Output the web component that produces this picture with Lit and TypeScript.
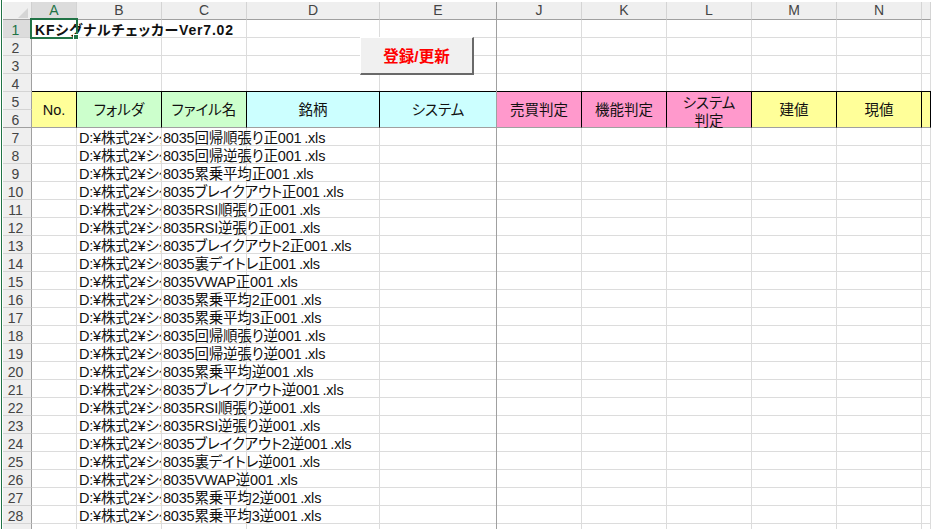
import { LitElement, css, html } from 'lit';
import { customElement } from 'lit/decorators.js';

const COLUMNS = ['A', 'B', 'C', 'D', 'E', 'J', 'K', 'L', 'M', 'N', ''];
const ROW_COUNT = 29;

const HEADERS = [
  { label: 'No.', tone: 'yellow' },
  { label: 'フォルダ', tone: 'green' },
  { label: 'ファイル名', tone: 'green' },
  { label: '銘柄', tone: 'cyan' },
  { label: 'システム', tone: 'cyan' },
  { label: '売買判定', tone: 'pink' },
  { label: '機能判定', tone: 'pink' },
  { label: 'システム<br>判定', tone: 'pink tall' },
  { label: '建値', tone: 'yellow' },
  { label: '現値', tone: 'yellow' },
  { label: '', tone: 'yellow' },
];

const NAMES = ['回帰順張り', '回帰逆張り', '累乗平均', 'ブレイクアウト', 'RSI順張り', 'RSI逆張り', 'ブレイクアウト2', '裏デイトレ', 'VWAP', '累乗平均2', '累乗平均3'];
const FILES = [...NAMES.map((n) => `8035${n}正001 .xls`), ...NAMES.map((n) => `8035${n}逆001 .xls`)];

@customElement('app-root')
export class AppRoot extends LitElement {
  static styles = css`
    :host {
      display: block;
      position: relative;
      width: 931px;
      height: 529px;
      overflow: hidden;
      background: #fff;
      font-family: 'Liberation Sans', 'Noto Sans CJK JP', sans-serif;
      font-feature-settings: 'palt';
      font-size: 14.5px;
      color: #111;
    }

    .edge {
      position: absolute;
      left: 1px;
      top: 0;
      bottom: 0;
      width: 1px;
      background: #217346;
      z-index: 5;
    }

    .sheet {
      display: grid;
      grid-template-columns: 32px 45px 85px 85px 133px 117px 85px 85px 85px 85px 85px 9px;
      grid-template-rows: 2px 18px repeat(29, 18px);
    }

    .top {
      grid-column: 1 / -1;
    }

    .corner {
      background: #efefef;
      border-bottom: 1px solid #a0a0a0;
      border-right: 1px solid #d0d0d0;
      box-sizing: border-box;
      position: relative;
      margin-left: 3px;
    }

    .corner::after {
      content: '';
      position: absolute;
      right: 3px;
      bottom: 1px;
      border-left: 10px solid transparent;
      border-bottom: 10px solid #d5d5d5;
    }

    .col {
      background: #efefef;
      border-bottom: 1px solid #a0a0a0;
      border-right: 1px solid #d4d4d4;
      box-sizing: border-box;
      color: #444;
      font-size: 14px;
      line-height: 17px;
      text-align: center;
    }

    .col.active {
      background: #dcdcdc;
      color: #217346;
      border-bottom-color: #217346;
    }

    .row {
      background: #efefef;
      border-bottom: 1px solid #d4d4d4;
      border-right: 1px solid #a0a0a0;
      box-sizing: border-box;
      color: #444;
      font-size: 14px;
      line-height: 18px;
      padding-top: 1px;
      text-align: center;
      margin-left: 3px;
      padding-right: 3px;
    }

    .row.active {
      background: #dcdcdc;
      color: #217346;
    }

    .row.split {
      border-bottom-color: #a0a0a0;
    }

    .cell {
      border-bottom: 1px solid #dcdcdc;
      border-right: 1px solid #dcdcdc;
      box-sizing: border-box;
      line-height: 18px;
      padding-top: 1px;
      white-space: nowrap;
      overflow: hidden;
      padding-left: 2px;
      letter-spacing: -0.2px;
      word-spacing: -1px;
    }

    .cell.file {
      overflow: visible;
      padding-left: 1px;
    }

    .cell.freeze {
      border-right-color: #a0a0a0;
    }

    .title {
      overflow: visible;
      font-weight: 700;
      font-size: 14px;
      letter-spacing: 0.8px;
      padding-left: 3px;
      position: relative;
      z-index: 1;
    }

    .head {
      grid-row: span 2;
      display: flex;
      align-items: center;
      justify-content: center;
      text-align: center;
      box-sizing: border-box;
      border-top: 1px solid #000;
      border-right: 1px solid #000;
      border-bottom: 1px solid #a0a0a0;
      margin-top: -1px;
      padding-top: 1px;
      line-height: 18px;
      font-size: 14.5px;
    }

    .head.yellow { background: #ffff99; }
    .head.green { background: #ccffcc; }
    .head.cyan { background: #ccffff; }
    .head.pink { background: #ff99cc; }

    .head.tall {
      padding-top: 4px;
    }

    .head.freeze {
      border-right-color: #a0a0a0;
    }

    .selection {
      position: absolute;
      left: 30px;
      top: 18px;
      width: 48px;
      height: 21px;
      box-sizing: border-box;
      border: 2px solid #217346;
      z-index: 3;
    }

    .selection::after {
      content: '';
      position: absolute;
      right: -3px;
      bottom: -3px;
      width: 4px;
      height: 4px;
      background: #217346;
      border: 1px solid #fff;
    }

    .freeze-line {
      position: absolute;
      left: 496px;
      top: 2px;
      bottom: 0;
      width: 1px;
      background: #a0a0a0;
      z-index: 2;
    }

    .button {
      position: absolute;
      left: 360px;
      top: 37px;
      width: 114px;
      height: 38px;
      box-sizing: border-box;
      display: flex;
      align-items: center;
      justify-content: center;
      padding-bottom: 2px;
      background: #f0f0f0;
      border-top: 1px solid #fff;
      border-left: 1px solid #fff;
      border-right: 2px solid #696969;
      border-bottom: 2px solid #696969;
      color: #ff0000;
      font-weight: 700;
      font-size: 15.5px;
      z-index: 4;
    }
  `;

  private plainCells(rowNo: number) {
    return COLUMNS.map((_, i) => {
      const freeze = i === 4 ? 'freeze' : '';
      if (rowNo === 1 && i === 0) {
        return html`<div class="cell title">KFシグナルチェッカーVer7.02</div>`;
      }
      if (rowNo >= 7 && rowNo <= 28 && i === 1) {
        return html`<div class="cell">D:¥株式2¥シグナル</div>`;
      }
      if (rowNo >= 7 && rowNo <= 28 && i === 2) {
        // the file name runs on over the empty D cell
        return html`<div class="cell file">${FILES[rowNo - 7]}</div>`;
      }
      return html`<div class="cell ${freeze}"></div>`;
    });
  }

  render() {
    const rows = Array.from({ length: ROW_COUNT }, (_, i) => i + 1);
    return html`
      <div class="edge"></div>
      <div class="sheet">
        <div class="top"></div>
        <div class="corner"></div>
        ${COLUMNS.map((c, i) => html`<div class="col ${i === 0 ? 'active' : ''}">${c}</div>`)}
        ${rows.map((n) => {
          const cls = `row ${n === 1 ? 'active' : ''} ${n === 6 ? 'split' : ''}`;
          if (n === 5) {
            return html`<div class=${cls}>${n}</div>
              ${HEADERS.map(
                (h, i) => html`<div class="head ${h.tone} ${i === 4 ? 'freeze' : ''}" .innerHTML=${h.label}></div>`,
              )}`;
          }
          if (n === 6) return html`<div class=${cls}>${n}</div>`;
          return html`<div class=${cls}>${n}</div>${this.plainCells(n)}`;
        })}
      </div>
      <div class="freeze-line"></div>
      <div class="selection"></div>
      <div class="button">登録/更新</div>
    `;
  }
}

declare global {
  interface HTMLElementTagNameMap {
    'app-root': AppRoot;
  }
}
